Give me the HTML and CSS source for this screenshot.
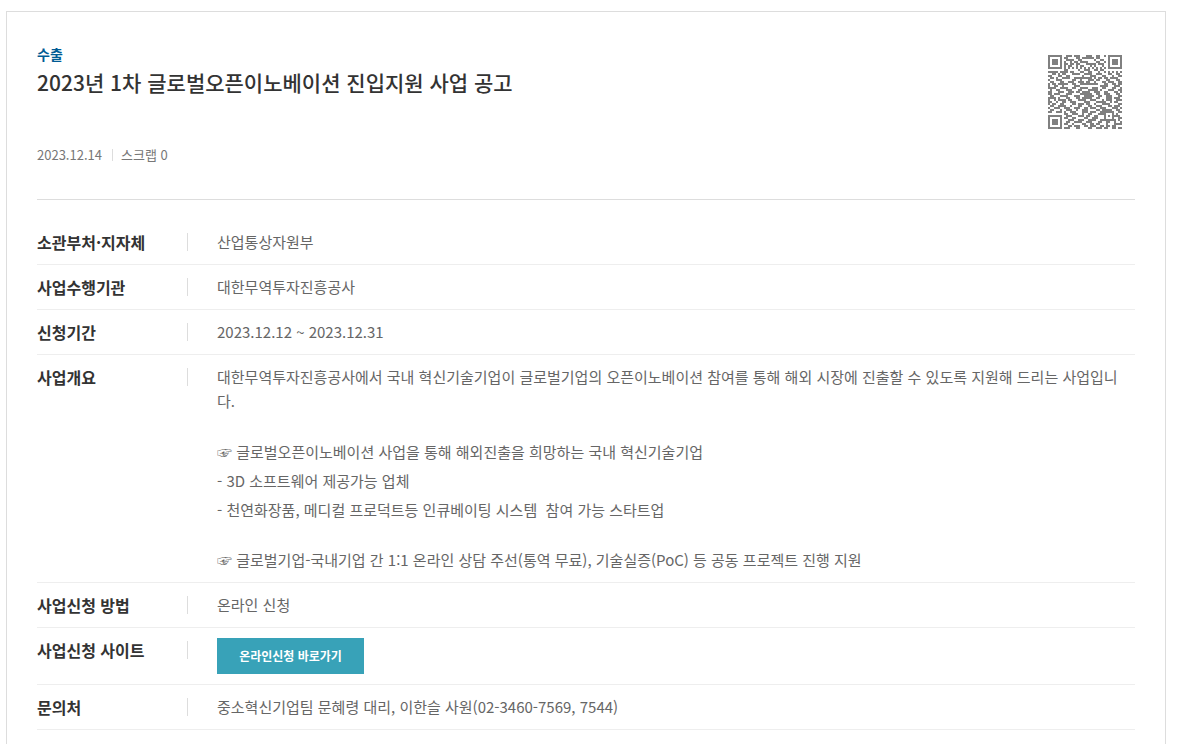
FILE: index.html
```html
<!DOCTYPE html>
<html lang="ko">
<head>
  <meta charset="UTF-8" />
  <meta name="viewport" content="width=device-width, initial-scale=1.0"/>
  <title>2023년 1차 글로벌오픈이노베이션 진입지원 사업 공고</title>
  <link rel="stylesheet" href="styles.css">
</head>
<body>
  <main class="view-box">
    <header class="view-head">
      <div class="head-text">
        <div class="category">수출</div>
        <h1 class="title">2023년 1차 글로벌오픈이노베이션 진입지원 사업 공고</h1>
        <div class="meta">
          <span>2023.12.14</span>
          <span class="scrap">스크랩 0</span>
        </div>
      </div>
      <svg class="qr" id="qr" viewBox="0 0 37 37" role="img" aria-label="QR 코드" shape-rendering="crispEdges"></svg>
    </header>

    <dl class="info-list">
      <div class="info-row">
        <dt>소관부처·지자체</dt>
        <dd>산업통상자원부</dd>
      </div>
      <div class="info-row">
        <dt>사업수행기관</dt>
        <dd>대한무역투자진흥공사</dd>
      </div>
      <div class="info-row">
        <dt>신청기간</dt>
        <dd>2023.12.12 ~ 2023.12.31</dd>
      </div>
      <div class="info-row">
        <dt>사업개요</dt>
        <dd class="summary">
          <p>대한무역투자진흥공사에서 국내 혁신기술기업이 글로벌기업의 오픈이노베이션 참여를 통해 해외 시장에 진출할 수 있도록 지원해 드리는 사업입니다.</p>
          <ul>
            <li>☞ 글로벌오픈이노베이션 사업을 통해 해외진출을 희망하는 국내 혁신기술기업</li>
            <li>- 3D 소프트웨어 제공가능 업체</li>
            <li>- 천연화장품, 메디컬 프로덕트등 인큐베이팅 시스템&nbsp; 참여 가능 스타트업</li>
          </ul>
          <p>☞ 글로벌기업-국내기업 간 1:1 온라인 상담 주선(통역 무료), 기술실증(PoC) 등 공동 프로젝트 진행 지원</p>
        </dd>
      </div>
      <div class="info-row">
        <dt>사업신청 방법</dt>
        <dd>온라인 신청</dd>
      </div>
      <div class="info-row">
        <dt>사업신청 사이트</dt>
        <dd class="link-cell"><a class="btn-apply" href="#">온라인신청 바로가기</a></dd>
      </div>
      <div class="info-row">
        <dt>문의처</dt>
        <dd>중소혁신기업팀 문혜령 대리, 이한슬 사원(02-3460-7569, 7544)</dd>
      </div>
    </dl>
  </main>
  <script src="qr.js"></script>
</body>
</html>
```
FILE: styles.css
```css
* { box-sizing: border-box; }
body {
  margin: 0;
  padding: 11px 15px 0 6px;
  background-color: #fff;
  color: #666;
  font-family: "Noto Sans CJK KR", "Noto Sans", sans-serif;
  font-size: 15px;
  line-height: 24px;
}
h1, p, ul, dl, dd { margin: 0; }
ul {
  padding: 0;
  list-style: none;
}

.view-box {
  min-height: 100vh;
  padding: 30px 30px 0;
  border: 1px solid #ddd;
}

/* 제목 영역 */
.view-head {
  display: flex;
  justify-content: space-between;
  align-items: flex-start;
  padding: 0 13px 32px 0;
  border-bottom: 1px solid #ddd;
}
.category {
  color: #005b94;
  font-size: 14px;
  font-weight: bold;
}
.title {
  color: #333;
  font-size: 21px;
  font-weight: 500;
  line-height: 32px;
}
.meta {
  display: flex;
  align-items: center;
  margin-top: 45px;
  color: #777;
  font-size: 13px;
}
.scrap {
  display: flex;
  align-items: center;
}
.scrap::before {
  content: "";
  height: 12px;
  margin: 0 8px 0 10px;
  border-left: 1px solid #ddd;
}
.qr {
  flex: none;
  width: 74px;
  height: 74px;
  margin-top: 13px;
  fill: #808080;
}

/* 공고 내용 */
.info-list { padding-top: 20px; }
.info-row {
  display: flex;
  padding: 10px 0;
  border-bottom: 1px solid #eee;
}
.info-row dt {
  display: flex;
  flex: none;
  justify-content: space-between;
  align-items: center;
  width: 151px;
  height: 24px;
  margin-right: 29px;
  color: #333;
  font-size: 16px;
  font-weight: bold;
}
.info-row dt::after {
  content: "";
  height: 18px;
  border-right: 1px solid #ddd;
}
.info-row dd {
  flex: 1;
  min-width: 0;
}
.info-row .summary { padding-right: 16px; }
.summary ul {
  margin: 24px 0;
  line-height: 29px;
}
.btn-apply {
  display: block;
  width: 147px;
  background-color: #38a2b8;
  color: #fff;
  font-size: 12px;
  font-weight: bold;
  line-height: 36px;
  text-align: center;
  text-decoration: none;
}
```
FILE: qr.js
```js
const rows = [
  '1111111001110111000111001100101111111',
  '1000001011000011011111101100001000001',
  '1011101001111001100000010011001011101',
  '1011101010010110111100001100101011101',
  '1011101011011011000111110111001011101',
  '1000001010110010110001010001001000001',
  '1111111010101010101010101010101111111',
  '0000000011000001001110011011000000000',
  '1111101111011000110011000100101010101',
  '0011010110001111001111001110001100110',
  '1100011001100000010001110001100010011',
  '0110100111100111111111010110110111100',
  '1000111000001100100011101100011000110',
  '0110001100111001110110010001101110011',
  '1011011111001100111111111000110011011',
  '1001100100000111000000000011110001110',
  '1111001111001100111100111001100011001',
  '0100110001110001100011111010001110011',
  '1100011100111011011110011100110001101',
  '1101110001110000111111001100111000110',
  '0110001111000111001111100110011100011',
  '1111010001100011011111001100011101110',
  '1001011110110001111001110001011100111',
  '1100100110011100001110001111100101100',
  '1011001100001101110110010001111000011',
  '0110011110010001100011001110001101110',
  '1001110011100111001101110011100011101',
  '0110001001110010011100001101111100110',
  '1100111010011100011101110011111110011',
  '0000000011001110010011000111100010100',
  '1111111001110001110110011000101011110',
  '1000001011001100001100111000100010011',
  '1011101000111001110011110011111111010',
  '1011101001100111100111000110011001001',
  '1011101011001000011001101100010001111',
  '1000001000110111001101110011011011000',
  '1111111011100011000011001110110011011'
];

// 한 칸씩 그리기
let cells = '';
rows.forEach((row, y) => {
  for (let x = 0; x < row.length; x++) {
    if (row[x] === '1') cells += `M${x} ${y}h1v1h-1z`;
  }
});
document.getElementById('qr').innerHTML = `<path d="${cells}"/>`;
```
